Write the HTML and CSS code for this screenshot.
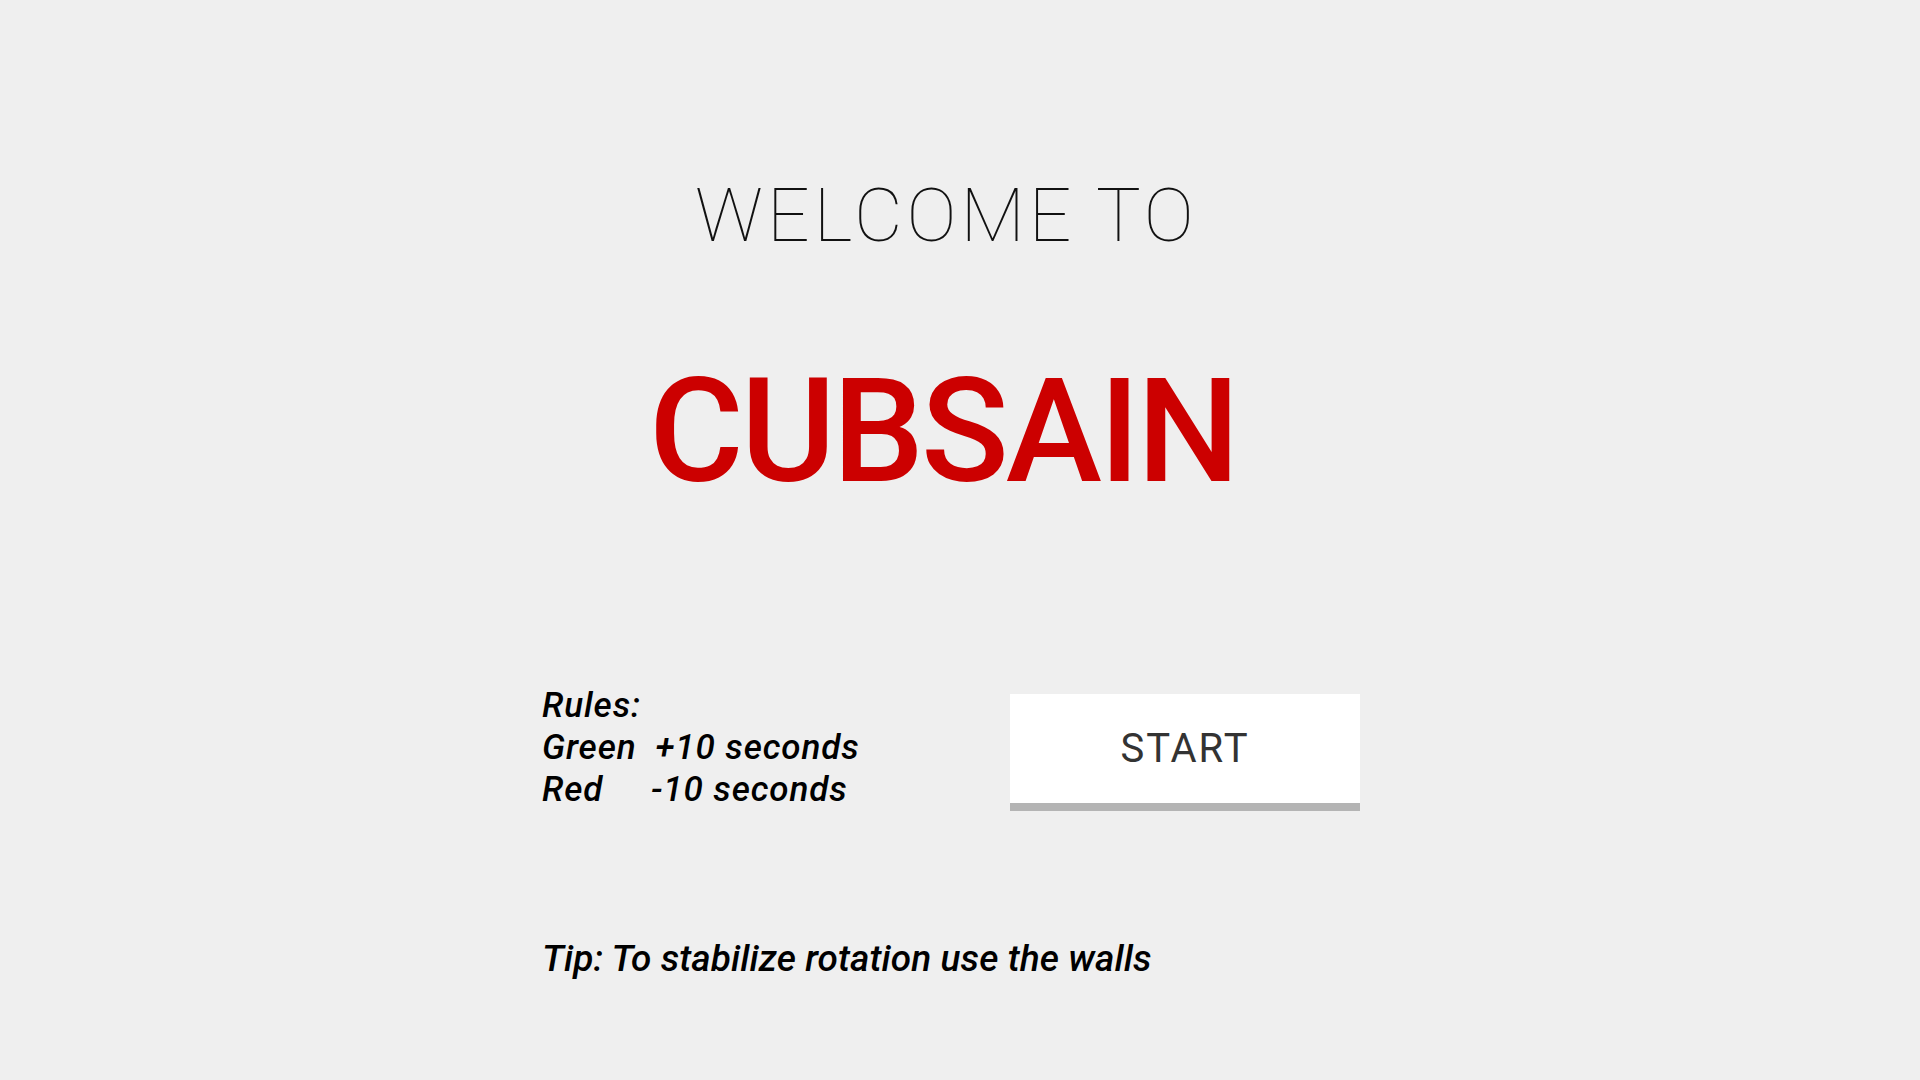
FILE: index.html
```html
<!DOCTYPE html>
<html lang="en">
<head>
<meta charset="utf-8">
<title>Cubsain</title>
<link rel="stylesheet" href="styles.css">
</head>
<body>
<main class="screen">
  <h2 class="welcome">WELCOME TO</h2>
  <h1 class="title">CUBSAIN</h1>
  <section class="panel">
    <div class="rules">Rules:
Green  +10 seconds
Red     -10 seconds</div>
    <button class="start">START</button>
  </section>
  <p class="tip">Tip: To stabilize rotation use the walls</p>
</main>
</body>
</html>
```

FILE: styles.css
```css
html, body {
  margin: 0;
  padding: 0;
  background: #efefef;
  font-family: Roboto, "Noto Sans", sans-serif;
  color: #000;
}

.screen {
  width: 818px;
  margin-left: 542px;
  padding-top: 178px;
  display: flex;
  flex-direction: column;
}

.welcome {
  margin: 0;
  padding-left: 153px;
  font-size: 75px;
  line-height: 1;
  font-weight: 100;
  letter-spacing: 4px;
  color: #111;
}

.title {
  margin: 106px 0 0;
  padding-left: 107px;
  font-size: 145px;
  line-height: 1;
  font-weight: 500;
  letter-spacing: -3px;
  color: #cc0000;
}

.panel {
  margin-top: 181px;
  display: flex;
  justify-content: space-between;
  align-items: flex-end;
}

.rules {
  white-space: pre;
  font-size: 35px;
  line-height: 42px;
  font-style: italic;
  font-weight: 500;
  letter-spacing: 0.9px;
}

.start {
  width: 350px;
  height: 117px;
  padding: 0;
  border: none;
  border-bottom: 8px solid #b4b4b4;
  background: #fff;
  font-family: Roboto, "Noto Sans", sans-serif;
  font-size: 40px;
  font-weight: 400;
  letter-spacing: 2px;
  color: #333;
  display: flex;
  align-items: center;
  justify-content: center;
  box-sizing: border-box;
}

.tip {
  margin: 126px 0 0;
  font-size: 37px;
  line-height: 44px;
  font-style: italic;
  font-weight: 500;
  letter-spacing: 0.1px;
}
```
